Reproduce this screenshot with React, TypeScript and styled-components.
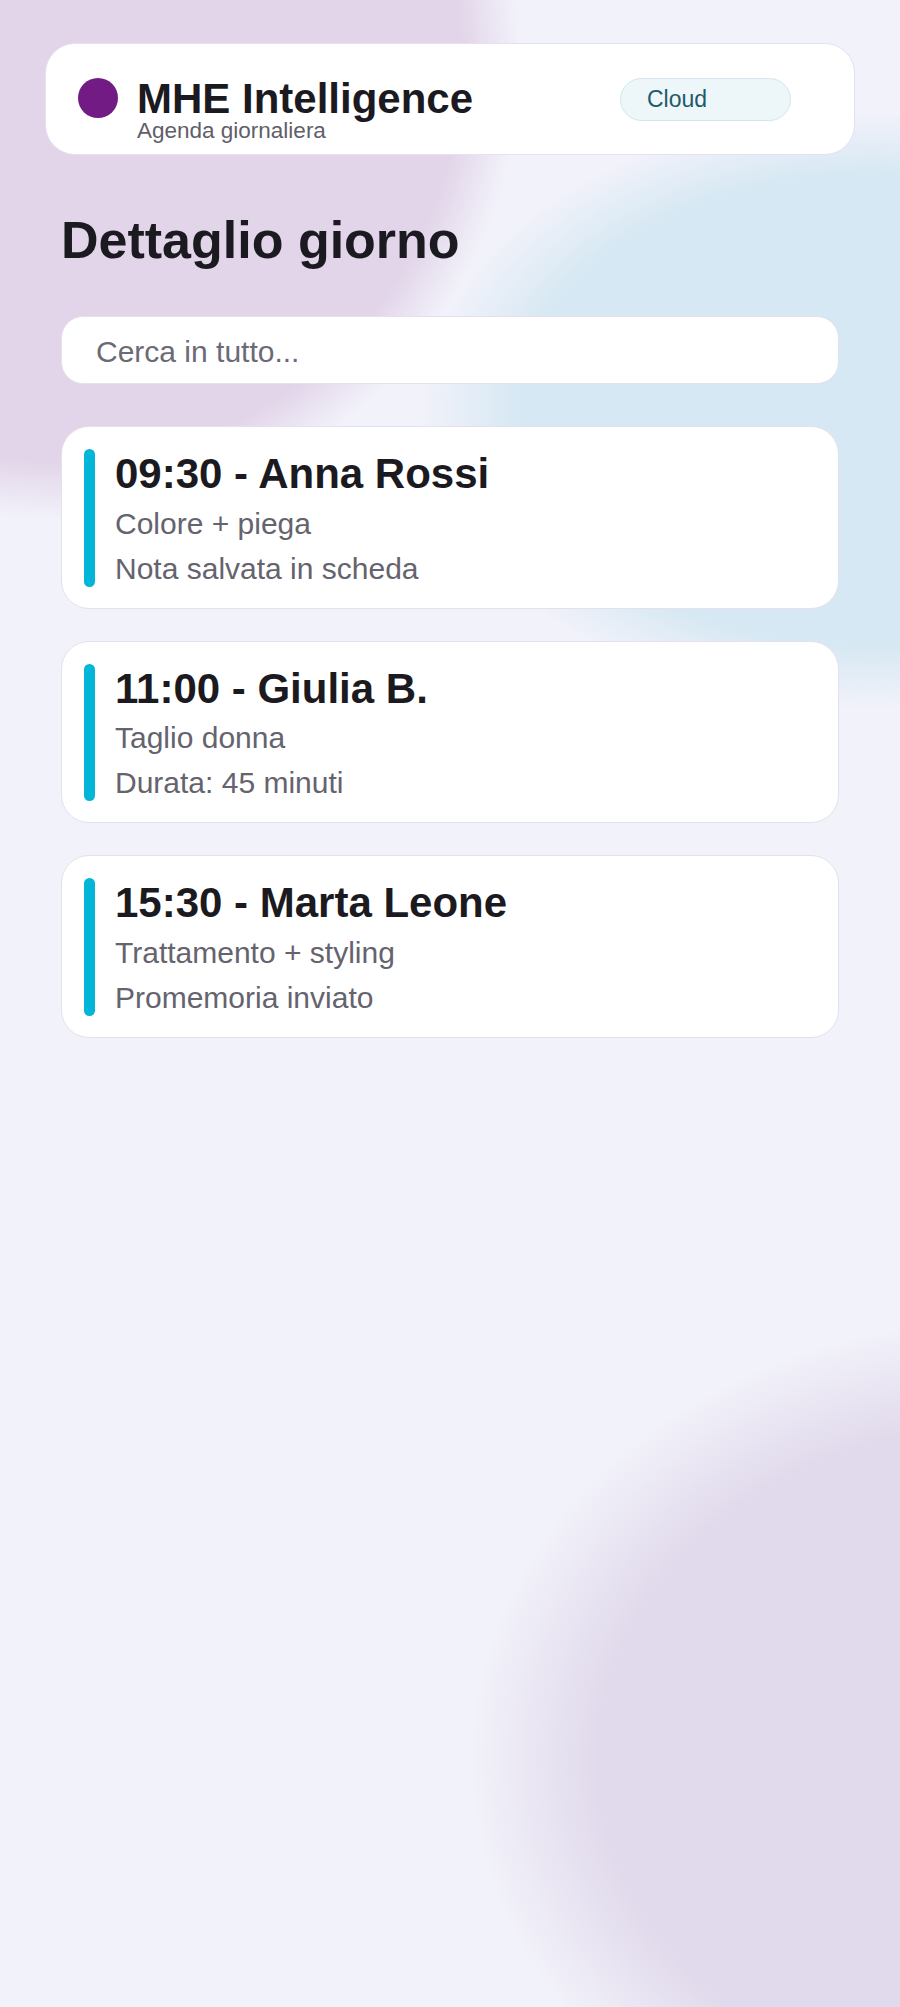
import styled, { createGlobalStyle } from 'styled-components'

const GlobalStyle = createGlobalStyle`
  html, body {
    margin: 0;
    padding: 0;
  }
  body {
    min-height: 100vh;
    font-family: "Liberation Sans", Arial, sans-serif;
    color: #1c1a21;
    background:
      radial-gradient(circle 460px at 60px 60px, #e2d4e9 0, #e2d4e9 87%, rgba(226, 212, 233, 0) 100%),
      radial-gradient(ellipse 450px 300px at 870px 410px, #d6e8f3 0, #d6e8f3 78%, rgba(214, 232, 243, 0) 100%),
      radial-gradient(ellipse 530px 440px at 1000px 1760px, #e1daec 0, #e1daec 76%, rgba(225, 218, 236, 0) 100%),
      #f2f2fa;
  }
`

interface Appointment {
  time: string
  client: string
  service: string
  note: string
}

const appointments: Appointment[] = [
  { time: '09:30', client: 'Anna Rossi', service: 'Colore + piega', note: 'Nota salvata in scheda' },
  { time: '11:00', client: 'Giulia B.', service: 'Taglio donna', note: 'Durata: 45 minuti' },
  { time: '15:30', client: 'Marta Leone', service: 'Trattamento + styling', note: 'Promemoria inviato' },
]

const Page = styled.div`
  padding: 43px 45px;
`

const Header = styled.header`
  display: flex;
  justify-content: space-between;
  align-items: flex-start;
  box-sizing: border-box;
  height: 112px;
  padding: 34px 63px 0 32px;
  background: #ffffff;
  border: 1px solid #e5e1ee;
  border-radius: 30px;
`

const Brand = styled.div`
  display: flex;
  align-items: flex-start;
`

const Dot = styled.span`
  width: 40px;
  height: 40px;
  border-radius: 50%;
  background: #721b84;
  margin-right: 19px;
  flex-shrink: 0;
`

const BrandText = styled.div`
  display: flex;
  flex-direction: column;
`

const AppName = styled.div`
  font-size: 42px;
  font-weight: 700;
  line-height: 1;
  color: #1c1a21;
`

const Tagline = styled.div`
  font-size: 22.5px;
  line-height: 1;
  color: #5f5e69;
`

const Badge = styled.span`
  box-sizing: border-box;
  width: 171px;
  height: 43px;
  display: flex;
  align-items: center;
  padding: 0 26px;
  border-radius: 999px;
  background: #edf6f9;
  border: 1px solid #d3e6ec;
  color: #1f5a6a;
  font-size: 23px;
`

const Main = styled.main`
  padding: 0 16px;
`

const PageTitle = styled.h1`
  margin: 55px 0 45px;
  font-size: 52px;
  line-height: 1.18;
  font-weight: 700;
  color: #1c1a21;
`

const Search = styled.input`
  display: block;
  width: 100%;
  box-sizing: border-box;
  height: 68px;
  padding: 4px 34px 0;
  border: 1px solid #e4e0ec;
  border-radius: 22px;
  background: #ffffff;
  font-family: inherit;
  font-size: 30px;
  color: #1c1a21;
  outline: none;

  &::placeholder {
    color: #6b6a75;
  }
`

const AgendaList = styled.div`
  display: flex;
  flex-direction: column;
  gap: 32px;
  margin-top: 42px;
`

const Card = styled.article`
  display: flex;
  gap: 20px;
  padding: 21px 22px 17px 22px;
  background: #ffffff;
  border: 1px solid #e4e0ec;
  border-radius: 28px;
`

const Accent = styled.span`
  width: 11px;
  flex-shrink: 0;
  margin: 1px 0 4px;
  border-radius: 6px;
  background: #03b5d6;
`

const CardBody = styled.div`
  display: flex;
  flex-direction: column;
`

const CardTitle = styled.div`
  font-size: 42px;
  font-weight: 700;
  line-height: 1.25;
  color: #1c1a21;
`

const CardLine = styled.div`
  font-size: 30px;
  line-height: 1.5;
  color: #64636e;
`

const App = () => {
  return (
    <>
      <GlobalStyle />
      <Page>
        <Header>
          <Brand>
            <Dot />
            <BrandText>
              <AppName>MHE Intelligence</AppName>
              <Tagline>Agenda giornaliera</Tagline>
            </BrandText>
          </Brand>
          <Badge>Cloud</Badge>
        </Header>

        <Main>
          <PageTitle>Dettaglio giorno</PageTitle>
          <Search type="text" placeholder="Cerca in tutto..." />

          <AgendaList>
            {appointments.map((a) => (
              <Card key={a.time}>
                <Accent />
                <CardBody>
                  <CardTitle>{a.time} - {a.client}</CardTitle>
                  <CardLine>{a.service}</CardLine>
                  <CardLine>{a.note}</CardLine>
                </CardBody>
              </Card>
            ))}
          </AgendaList>
        </Main>
      </Page>
    </>
  )
}

export default App
